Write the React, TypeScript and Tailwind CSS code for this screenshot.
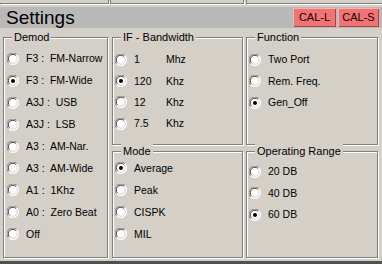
import React from "react";

const font = { fontFamily: '"Liberation Sans", Arial, sans-serif' };

function Radio({ checked }: { checked?: boolean }) {
  return (
    <svg width="12" height="12" viewBox="0 0 12 12" className="shrink-0">
      <circle cx="6" cy="6" r="5.5" fill="#ffffff" />
      <path d="M1.6 9.9 A5.5 5.5 0 0 1 9.9 1.6" fill="none" stroke="#808080" strokeWidth="1" />
      <path d="M2.6 9.0 A4.3 4.3 0 0 1 9.0 2.6" fill="none" stroke="#404040" strokeWidth="1" />
      <path d="M9.9 1.6 A5.5 5.5 0 0 1 1.6 9.9" fill="none" stroke="#ffffff" strokeWidth="1" />
      <path d="M9.0 2.6 A4.3 4.3 0 0 1 2.6 9.0" fill="none" stroke="#d4d0c8" strokeWidth="1" />
      {checked && <circle cx="6" cy="6" r="2" fill="#000" />}
    </svg>
  );
}

function Group({
  title,
  children,
  className,
  pt,
}: {
  title: string;
  children: React.ReactNode;
  className?: string;
  pt: string;
}) {
  return (
    <div
      className={`relative border border-[#808080] shadow-[inset_1px_1px_0_#ffffff,1px_1px_0_#ffffff] ${className ?? ""}`}
    >
      <span className="absolute -top-[8px] left-[8px] bg-[#d4d0c8] px-[2px] text-[11px] leading-[14px] text-black whitespace-pre">
        {title}
      </span>
      <div className={`flex flex-col ${pt}`}>{children}</div>
    </div>
  );
}

function Row({
  checked,
  children,
  h,
  pl,
}: {
  checked?: boolean;
  children: React.ReactNode;
  h: string;
  pl: string;
}) {
  return (
    <div className={`flex items-center gap-[7px] ${h} ${pl} text-[10.5px] leading-[13px] text-black whitespace-pre`}>
      <Radio checked={checked} />
      {children}
    </div>
  );
}

export default function App() {
  const demod = [
    "F3 :  FM-Narrow",
    "F3 :  FM-Wide",
    "A3J :  USB",
    "A3J :  LSB",
    "A3 :  AM-Nar.",
    "A3 :  AM-Wide",
    "A1 :  1Khz",
    "A0 :  Zero Beat",
    "Off",
  ];
  const ifbw: [string, string][] = [
    ["1", "Mhz"],
    ["120", "Khz"],
    ["12", "Khz"],
    ["7.5", "Khz"],
  ];
  return (
    <div className="w-[382px] h-[264px] bg-[#d4d0c8] flex flex-col overflow-hidden" style={font}>
      {/* top strip: bottoms of boxes above */}
      <div className="h-[7px] flex">
        <div className="w-[109px] h-[4px] border-b border-r border-[#808080] shadow-[1px_1px_0_#ffffff]" />
        <div className="ml-[1px] w-[134px] h-[4px] border-b border-x border-[#808080] shadow-[1px_1px_0_#ffffff]" />
        <div className="ml-[2px] flex-1 h-[4px] border-b border-l border-[#808080] shadow-[1px_1px_0_#ffffff]" />
      </div>
      {/* header */}
      <div className="h-[21px] bg-[#b9b9b9] flex items-center justify-between pl-[6px] pr-[3px]">
        <span className="text-[19px] leading-[21px] text-black">Settings</span>
        <div className="flex gap-[2px]">
          <div className="w-[43px] h-[19px] bg-[#f07474] flex items-center justify-center text-[11px] text-[#200000] shadow-[inset_1px_1px_0_#f8b0b0,inset_-1px_-1px_0_#a04848]">
            CAL-L
          </div>
          <div className="w-[41px] h-[19px] bg-[#f07474] flex items-center justify-center text-[11px] text-[#200000] shadow-[inset_1px_1px_0_#f8b0b0,inset_-1px_-1px_0_#a04848]">
            CAL-S
          </div>
        </div>
      </div>
      {/* content */}
      <div className="flex-1 flex pt-[9px] pb-[3px] pl-[3px] pr-[4px]">
        <Group title="Demod" className="w-[105px]" pt="pt-[10px]">
          {demod.map((d, i) => (
            <Row key={d} checked={i === 1} h="h-[21.9px]" pl="pl-[3px]">
              {d}
            </Row>
          ))}
        </Group>
        <div className="ml-[4px] w-[131px] flex flex-col gap-[6px]">
          <Group title="IF - Bandwidth" className="h-[108px]" pt="pt-[11px]">
            {ifbw.map(([a, b], i) => (
              <Row key={a} checked={i === 1} h="h-[21.4px]" pl="pl-[2px]">
                <span className="w-[25px]">{a}</span>
                <span>{b}</span>
              </Row>
            ))}
          </Group>
          <Group title="Mode" className="flex-1" pt="pt-[5px]">
            {["Average", "Peak", "CISPK", "MIL"].map((m, i) => (
              <Row key={m} checked={i === 0} h="h-[22px]" pl="pl-[2px]">
                {m}
              </Row>
            ))}
          </Group>
        </div>
        <div className="ml-[3px] flex-1 flex flex-col gap-[6px]">
          <Group title="Function" className="h-[108px]" pt="pt-[11px]">
            {["Two Port", "Rem. Freq.", "Gen_Off"].map((m, i) => (
              <Row key={m} checked={i === 2} h="h-[21.5px]" pl="pl-[2px]">
                {m}
              </Row>
            ))}
          </Group>
          <Group title="Operating Range" className="flex-1" pt="pt-[9px]">
            {["20 DB", "40 DB", "60 DB"].map((m, i) => (
              <Row key={m} checked={i === 2} h="h-[21.5px]" pl="pl-[2px]">
                {m}
              </Row>
            ))}
          </Group>
        </div>
      </div>
      <div className="h-[3px] bg-[#505050]" />
    </div>
  );
}
